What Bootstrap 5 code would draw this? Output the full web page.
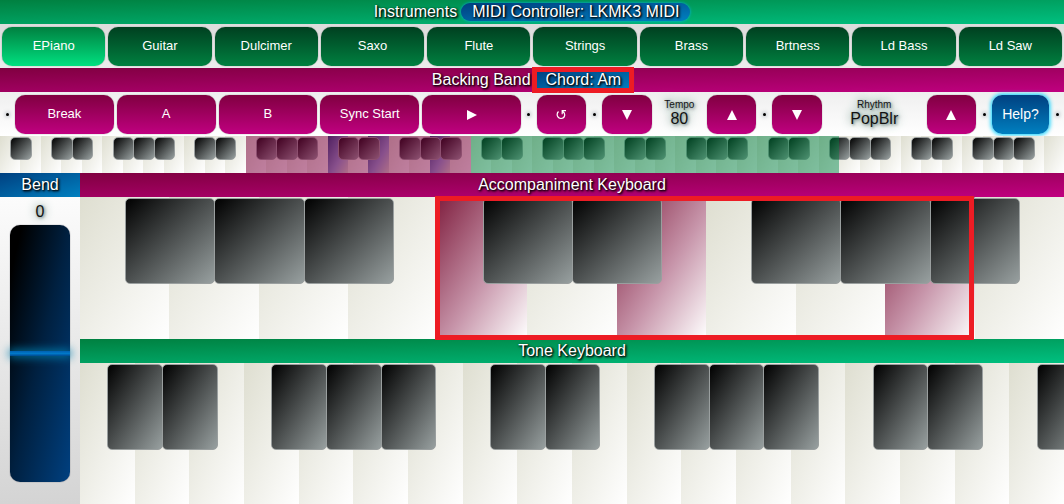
<!DOCTYPE html>
<html lang="en">
<head>
<meta charset="utf-8">
<meta name="viewport" content="width=device-width, initial-scale=1">
<title>Arranger Keyboard</title>
<link href="https://cdn.jsdelivr.net/npm/bootstrap@5.3.0/dist/css/bootstrap.min.css" rel="stylesheet">
<style>
body { font-family: "Liberation Sans", Arial, sans-serif; font-size: 16px; line-height: 24px; background: #fff; }
.bar { height: 24px; color: #fff; font-size: 16px; line-height: 24px; font-weight: 400; text-shadow: 1px 1px 3px #000, 1px 1px 2px #000; }
.bar-green { background: linear-gradient(to bottom right, #008040, #00c080); box-shadow: 0 1px 0 #9fd4bd; }
.bar-plum { background: linear-gradient(to bottom right, #800040, #c00080); }
.bar-blue { background: linear-gradient(to bottom right, #004080, #0080c0); }
.pill { height: 18px; line-height: 18px; padding: 0 11px; border-radius: 10px; background: linear-gradient(to bottom right, #004080, #0080c0); box-shadow: 0 0 3px #00b4f0; }
.pill-dim { border-radius: 4px; }
.callout { border: 5px solid #ed1c24; pointer-events: none; }
.callout-chord { inset: -4px -2px -4px -3px; }
.callout-keys { top: -1px; bottom: -1px; left: calc(100% * 4 / 11 - 3px); width: calc(100% * 6 / 11 + 2px); z-index: 5; }
.strip { height: 44px; padding: 2px; gap: 3px; background: linear-gradient(#dcdcdc, #ececec); }
.controls { display: grid; background: linear-gradient(#efefef, #fff);
  grid-template-columns: 10px repeat(5, 2fr) 10px 1fr 10px 1fr 1fr 1fr 10px 1fr 2fr 1fr 10px 57px 10px; }
.pad { min-width: 0; height: 39px; padding: 0; border: 0; border-radius: 10px; color: #fff; font-size: 13px; line-height: 20px; box-shadow: 0 0 1px #555; }
.pad:hover { color: #fff; }
.pad-green { background: linear-gradient(#004020, #008040); }
.pad-lit { background: linear-gradient(#008040, #00e080); }
.pad-plum { background: linear-gradient(#800040, #c00080); }
.pad-help { background: linear-gradient(#004080, #0080c0); box-shadow: 0 0 4px 1px #00d0ff; font-size: 14px; }
.pad svg { fill: #fff; }
.sep { width: 3px; height: 3px; border-radius: 2px; background: #000; box-shadow: 0 0 4px #456; }
.readout { color: #111; text-shadow: 0 0 12px #8fb0a4, 0 0 8px #a0b8b0, 1px 1px 3px #566; }
.readout-name { font-size: 10px; line-height: 10px; }
.readout-value { font-size: 16px; line-height: 18px; }
.keys { height: 37px; background: #fff; }
.white-key { background: linear-gradient(to bottom right, #deded0, #fff); }
.black-key { top: 1px; left: 50%; width: calc(100% + 1px); height: 61%; z-index: 2; border: 1px solid #9a9f9f; border-radius: 5px; background: linear-gradient(to bottom right, #000, #98a0a0); }
.key-mini .black-key { height: 23px; }
.pressed .white-key { background: linear-gradient(to bottom right, #802040, #c795aa 55%, #fff); }
.key-mini.pressed .white-key { background: linear-gradient(to bottom right, #204080, #90a0d8 60%, #deded0); }
.zone { z-index: 3; top: 0; bottom: 0; }
.zone-plum { left: calc(100% * 12 / 52); width: calc(100% * 11 / 52); background: rgba(128, 0, 64, .5); }
.zone-green { left: calc(100% * 23 / 52); width: calc(100% * 18 / 52); background: rgba(0, 128, 64, .5); }
.bend { width: 80px; background: linear-gradient(#fff, #d4d4d4); }
.bend-value { height: 28px; line-height: 30px; }
.wheel { appearance: none; -webkit-appearance: none; writing-mode: vertical-lr; width: 60px; min-height: 0; margin: 0 0 22px; border-radius: 10px; background: linear-gradient(to bottom right, #000 10%, #002040 50%, #004080); box-shadow: 0 0 1px #334; }
.wheel::-webkit-slider-thumb { appearance: none; -webkit-appearance: none; width: 60px; height: 5px; border: 0; border-radius: 0; background: linear-gradient(#0060b0, #0078c8, #004a90); box-shadow: 0 0 10px 1px #0080b0; }
</style>
</head>
<body>
<main class="d-flex flex-column vh-100 overflow-hidden">
  <h2 class="bar bar-green m-0 d-flex justify-content-center align-items-center gap-1 flex-shrink-0">
    <span>Instruments</span><span class="pill">MIDI Controller: LKMK3 MIDI</span>
  </h2>
  <div class="strip d-flex flex-shrink-0 align-items-center" id="instruments"></div>
  <h2 class="bar bar-plum m-0 d-flex justify-content-center align-items-center gap-1 flex-shrink-0">
    <span>Backing Band</span><span class="pill pill-dim position-relative">Chord: Am<span class="callout callout-chord position-absolute"></span></span>
  </h2>
  <div class="strip controls flex-shrink-0 align-items-center">
    <span class="sep mx-auto"></span>
    <button class="btn pad pad-plum" type="button">Break</button>
    <button class="btn pad pad-plum" type="button">A</button>
    <button class="btn pad pad-plum" type="button">B</button>
    <button class="btn pad pad-plum" type="button">Sync Start</button>
    <button class="btn pad pad-plum" type="button" aria-label="Play"><svg width="11" height="10" viewBox="0 0 11 10"><path d="M1 0 11 5 1 10z"/></svg></button>
    <span class="sep mx-auto"></span>
    <button class="btn pad pad-plum" type="button" aria-label="Reset"><svg width="11" height="11" viewBox="0 0 11 11"><path d="M2.500 2.500C0 5 1.200 9.500 5 9.500 9.200 9.500 10 4.500 6.500 2.200M10 1.700H6.200V5.200" style="fill:none;stroke:#fff;stroke-width:1.200"/></svg></button>
    <span class="sep mx-auto"></span>
    <button class="btn pad pad-plum" type="button" aria-label="Tempo down"><svg width="10" height="10" viewBox="0 0 10 10"><path d="M0 0h10L5 10z"/></svg></button>
    <div class="readout text-center"><div class="readout-name">Tempo</div><div class="readout-value">80</div></div>
    <button class="btn pad pad-plum" type="button" aria-label="Tempo up"><svg width="10" height="10" viewBox="0 0 10 10"><path d="M0 10h10L5 0z"/></svg></button>
    <span class="sep mx-auto"></span>
    <button class="btn pad pad-plum" type="button" aria-label="Previous rhythm"><svg width="10" height="10" viewBox="0 0 10 10"><path d="M0 0h10L5 10z"/></svg></button>
    <div class="readout text-center"><div class="readout-name">Rhythm</div><div class="readout-value">PopBlr</div></div>
    <button class="btn pad pad-plum" type="button" aria-label="Next rhythm"><svg width="10" height="10" viewBox="0 0 10 10"><path d="M0 10h10L5 0z"/></svg></button>
    <span class="sep mx-auto"></span>
    <button class="btn pad pad-help" type="button">Help?</button>
    <span class="sep mx-auto"></span>
  </div>
  <div class="keys position-relative d-flex flex-shrink-0 overflow-hidden" id="overview">
    <span class="zone zone-plum position-absolute"></span>
    <span class="zone zone-green position-absolute"></span>
  </div>
  <div class="d-flex flex-fill" style="min-height:0">
    <section class="bend d-flex flex-column align-items-center flex-shrink-0">
      <label class="bar bar-blue w-100 text-center flex-shrink-0" for="bend">Bend</label>
      <output class="readout bend-value flex-shrink-0" for="bend">0</output>
      <input class="wheel flex-fill" type="range" id="bend" min="-64" max="64" value="0">
    </section>
    <div class="d-flex flex-column flex-fill">
      <h2 class="bar bar-plum m-0 text-center flex-shrink-0">Accompaniment Keyboard</h2>
      <div class="keys position-relative d-flex flex-fill" id="accompaniment">
        <span class="callout callout-keys position-absolute"></span>
      </div>
      <h2 class="bar bar-green m-0 text-center flex-shrink-0">Tone Keyboard</h2>
      <div class="keys position-relative d-flex flex-fill overflow-hidden" id="tone"></div>
    </div>
  </div>
</main>
<script src="https://cdn.jsdelivr.net/npm/bootstrap@5.3.0/dist/js/bootstrap.bundle.min.js"></script>
<script>
const instruments = ["EPiano", "Guitar", "Dulcimer", "Saxo", "Flute", "Strings", "Brass", "Brtness", "Ld Bass", "Ld Saw"];
document.getElementById("instruments").innerHTML = instruments.map((name, i) =>
  `<button type="button" class="btn pad w-100 ${i ? "pad-green" : "pad-lit"}">${name}</button>`).join("");

// Builds a run of white keys; every note but E and B carries its sharp on the right edge.
function buildKeys(id, count, firstNote, pressed, playable) {
  const notes = "CDEFGAB";
  const start = notes.indexOf(firstNote);
  const tag = playable ? "button" : "span";
  let html = "";
  for (let i = 0; i < count; i++) {
    const note = notes[(start + i) % 7];
    const hasSharp = !"EB".includes(note) && (playable || i < count - 1);
    const attrs = name => playable ? ` type="button" aria-label="${name}"` : "";
    html += `<div class="position-relative h-100 w-100${playable ? "" : " key-mini"}${pressed.includes(i) ? " pressed" : ""}">
      <${tag} class="white-key d-block w-100 h-100 border-0 p-0"${attrs(note)}></${tag}>
      ${hasSharp ? `<${tag} class="black-key position-absolute p-0"${attrs(note + " sharp")}></${tag}>` : ""}</div>`;
  }
  document.getElementById(id).insertAdjacentHTML("beforeend", html);
}
buildKeys("overview", 52, "A", [16, 18, 21], false);
buildKeys("accompaniment", 11, "F", [4, 6, 9], true);
buildKeys("tone", 18, "C", [], true);
</script>
</body>
</html>
